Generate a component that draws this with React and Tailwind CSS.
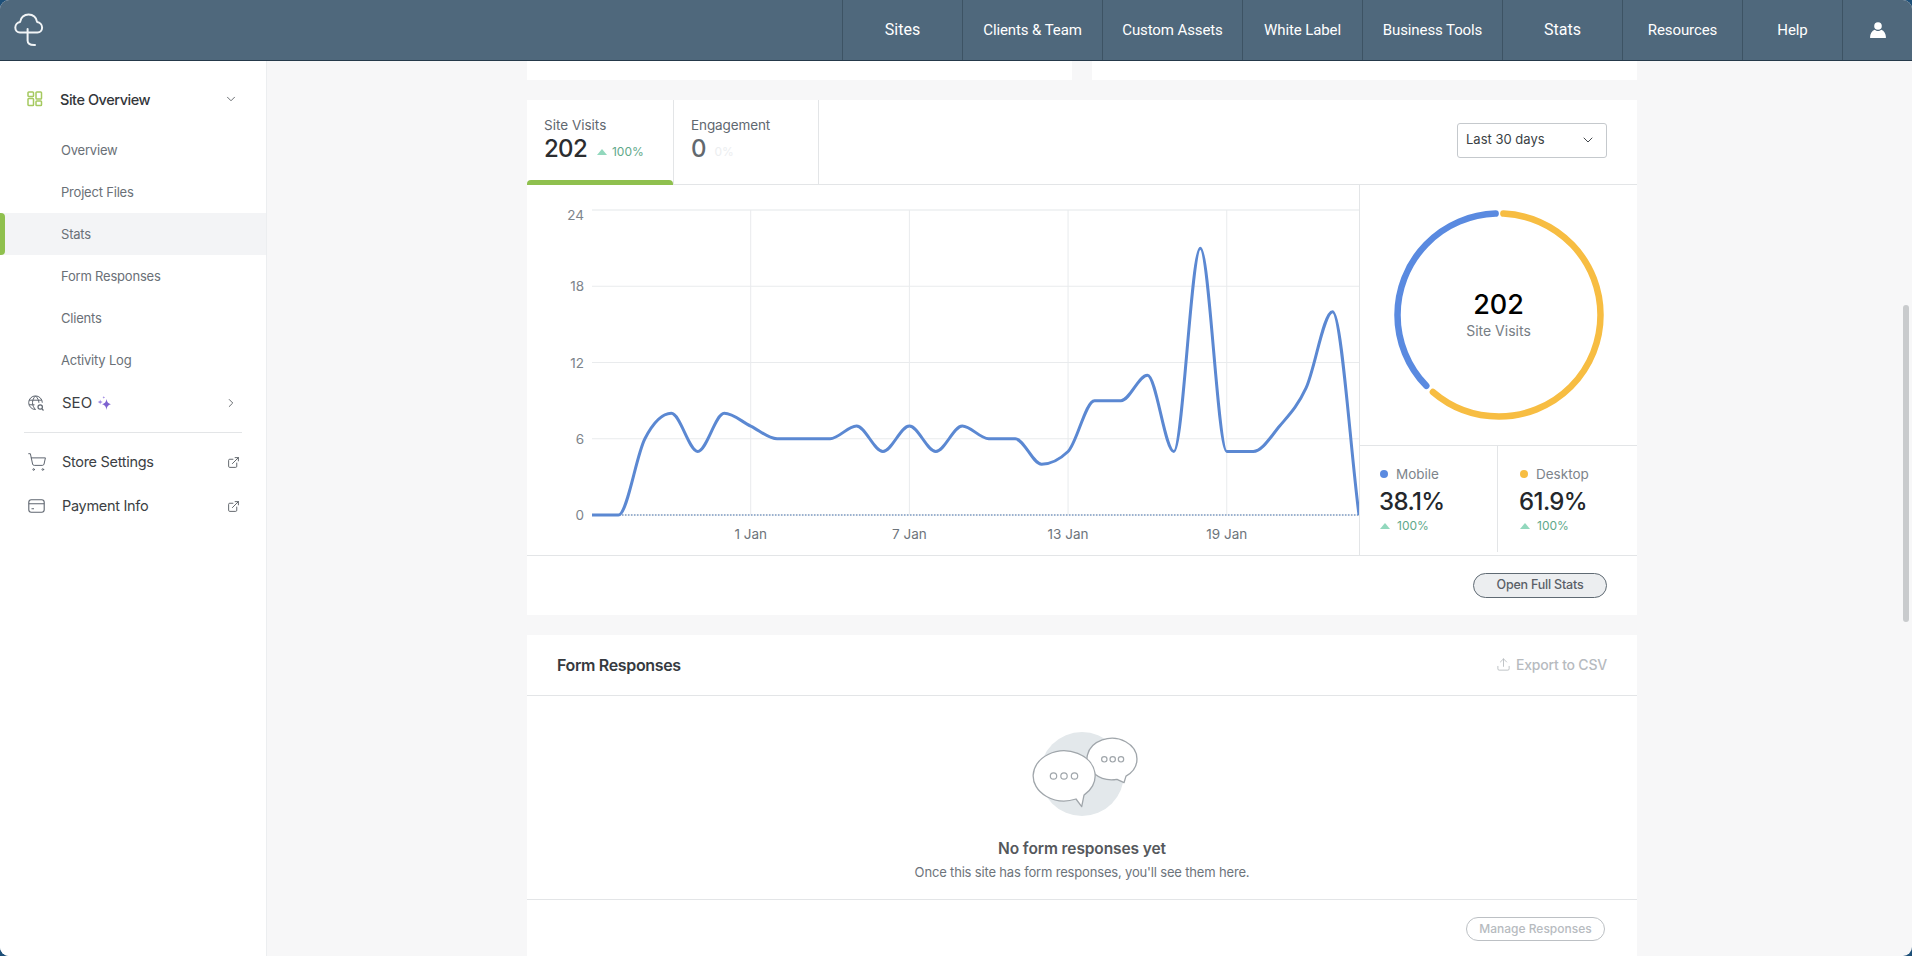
import { ChevronDown, ChevronRight, ExternalLink, ShoppingCart, Upload } from "lucide-react"

const navItems = [
  { label: "Sites", width: "w-[120px]", big: true },
  { label: "Clients & Team", width: "w-[140px]" },
  { label: "Custom Assets", width: "w-[140px]" },
  { label: "White Label", width: "w-[120px]" },
  { label: "Business Tools", width: "w-[140px]" },
  { label: "Stats", width: "w-[120px]", big: true },
  { label: "Resources", width: "w-[120px]" },
  { label: "Help", width: "w-[100px]" },
]

const subItems = ["Overview", "Project Files", "Stats", "Form Responses", "Clients", "Activity Log"]

// visits per day, 26 Dec to 24 Jan
const visits = [0, 0, 6, 8, 5, 8, 7, 6, 6, 6, 7, 5, 7, 5, 7, 6, 6, 4, 5, 9, 9, 11, 5, 21, 5, 5, 7, 10, 16, 0]

const chartLeft = 65
const chartBottom = 330
const dayWidth = 767 / 29
const unit = 305 / 24

function monotonePath(values) {
  const pts = values.map((v, i) => [chartLeft + i * dayWidth, chartBottom - v * unit])
  const n = pts.length
  const slopes = []
  for (let i = 0; i < n - 1; i++) slopes.push((pts[i + 1][1] - pts[i][1]) / dayWidth)
  const tangents = [slopes[0]]
  for (let i = 1; i < n - 1; i++) {
    const a = slopes[i - 1]
    const b = slopes[i]
    tangents.push(a * b <= 0 ? 0 : (Math.sign(a) + Math.sign(b)) * Math.min(Math.abs(a), Math.abs(b), 0.25 * Math.abs(a + b)))
  }
  tangents.push(slopes[n - 2])
  let d = `M${pts[0][0]} ${pts[0][1]}`
  for (let i = 0; i < n - 1; i++) {
    const h = dayWidth / 3
    d += ` C${pts[i][0] + h} ${pts[i][1] + tangents[i] * h} ${pts[i + 1][0] - h} ${pts[i + 1][1] - tangents[i + 1] * h} ${pts[i + 1][0]} ${pts[i + 1][1]}`
  }
  return d
}

function Logo() {
  return (
    <svg width="58" height="60" viewBox="0 0 58 60" fill="none" stroke="#f1f4f6" strokeWidth="2" strokeLinecap="round" strokeLinejoin="round">
      <path d="M19.900 32.500c-2.600 0-4.600-2.200-4.600-4.900 0-2.900 2.100-5.200 4.800-5.600.5-4.400 4.100-7.500 8.500-7.500s8 3.100 8.500 7.500c2.800.4 5 2.700 5 5.600 0 2.700-2 4.900-4.600 4.900z" />
      <path d="M27.600 29v11.500c0 3 1.800 4.700 7.400 4.500" />
    </svg>
  )
}

function UserIcon() {
  return (
    <svg width="16" height="16" viewBox="0 0 16 16" fill="#fff">
      <circle cx="8" cy="4" r="3.800" />
      <path d="M4.700 7.700C2 8.800.2 11.300 0 15.500c0 .3.200.5.500.5h15c.3 0 .5-.2.500-.5-.2-4.200-2-6.700-4.700-7.800-1 .9-2.300 1.300-3.300 1.300s-2.300-.4-3.300-1.300z" />
    </svg>
  )
}

function OverviewIcon() {
  return (
    <svg width="16" height="16" viewBox="0 0 16 16" fill="none" stroke="#a5c95f" strokeWidth="1.500">
      <rect x="1" y="1" width="5.500" height="4.500" rx="0.800" />
      <rect x="1" y="7.500" width="5.500" height="7" rx="0.800" />
      <rect x="9" y="1" width="5.500" height="7" rx="0.800" />
      <rect x="9" y="10" width="5.500" height="4.500" rx="0.800" />
    </svg>
  )
}

function SeoIcon() {
  return (
    <svg width="17" height="17" viewBox="0 0 17 17" fill="none" stroke="#5f6670" strokeWidth="1">
      <path d="M7.500 14.500a6.800 6.800 0 1 1 6.800-6.800" />
      <path d="M7.500 1c-4 3.800-4 9.500 0 13.500M7.500 1c2.400 2.200 3.300 4.500 3.400 6.800M1 5.200h12.800M1 9.800h5.500" />
      <circle cx="12.200" cy="12" r="2.200" strokeWidth="1.200" />
      <path d="M13.800 13.700l1.700 1.800" strokeWidth="1.200" />
    </svg>
  )
}

function Sparkles() {
  return (
    <svg width="15" height="15" viewBox="0 0 15 15" fill="#7d62d0">
      <path d="M9.500 3c.5 3 1.500 4.300 4.500 5.200-3 .9-4 2.200-4.500 5.800C9 10.400 8 9.100 5 8.200 8 7.300 9 6 9.500 3z" />
      <path d="M3.200 3.500c.3 1.500.8 2 2.500 2.500-1.700.5-2.200 1-2.500 2.500C2.900 7 2.400 6.500.7 6c1.700-.5 2.200-1 2.500-2.500z" fill="#a08ae2" />
      <path d="M6.800 0c.2.900.4 1.100 1.300 1.400-.9.300-1.100.5-1.300 1.400-.2-.9-.4-1.100-1.300-1.400.9-.3 1.100-.5 1.300-1.400z" fill="#a08ae2" />
    </svg>
  )
}

function CardIcon() {
  return (
    <svg width="17" height="14" viewBox="0 0 17 14" fill="none" stroke="#5f6670" strokeWidth="1.100">
      <rect x="0.800" y="0.800" width="15.400" height="12.400" rx="2.500" />
      <path d="M.8 4.700h15.400M3.500 9.700h2.500" />
    </svg>
  )
}

function Trend({ className }) {
  return (
    <span className={`flex items-center text-[12px] leading-none text-[#5fa88a] ${className}`}>
      <span className="w-0 h-0 border-x-[5px] border-x-transparent border-b-[6px] border-b-[#92d8bd]"></span>
      100%
    </span>
  )
}

function VisitsChart() {
  const yLabels = [24, 18, 12, 6, 0]
  const xLabels = [["1 Jan", 6], ["7 Jan", 12], ["13 Jan", 18], ["19 Jan", 24]]
  return (
    <svg width="832" height="370" viewBox="0 0 832 370" className="block shrink-0" fontFamily="Inter, sans-serif" fontSize="13.500">
      {yLabels.map(v => (
        <line key={v} x1={chartLeft} x2="832" y1={chartBottom - v * unit} y2={chartBottom - v * unit} stroke={v === 24 ? "#f1f3f4" : "#e9ebed"} strokeWidth={v === 24 ? 2 : 1} />
      ))}
      {xLabels.map(([label, day]) => (
        <line key={label} x1={chartLeft + day * dayWidth} x2={chartLeft + day * dayWidth} y1="25" y2={chartBottom} stroke="#e9ebed" />
      ))}
      <line x1={chartLeft} x2="832" y1={chartBottom} y2={chartBottom} stroke="#7f9cc4" strokeWidth="1.500" strokeDasharray="1.500 1.500" />
      <path d={monotonePath(visits)} fill="none" stroke="#5b88d2" strokeWidth="3" strokeLinejoin="round" />
      {yLabels.map(v => (
        <text key={v} x="57" y={v === 24 ? 35 : chartBottom - v * unit + 5} textAnchor="end" fill="#7d848b">{v}</text>
      ))}
      {xLabels.map(([label, day]) => (
        <text key={label} x={chartLeft + day * dayWidth} y="354" textAnchor="middle" fill="#6d747b">{label}</text>
      ))}
    </svg>
  )
}

function Donut() {
  const r = 101.500
  const c = 2 * Math.PI * r
  const mobile = 0.381
  const gap = 9
  return (
    <div className="relative w-[216px] h-[216px]">
      <svg width="216" height="216" viewBox="0 0 216 216" fill="none" strokeWidth="6.500" strokeLinecap="round" className="-rotate-90">
        <circle cx="108" cy="108" r={r} stroke="#f7bd42" strokeDasharray={`${c * (1 - mobile) - gap} ${c}`} strokeDashoffset={-gap / 2} />
        <circle cx="108" cy="108" r={r} stroke="#5a8ae0" strokeDasharray={`${c * mobile - gap} ${c}`} strokeDashoffset={-(c * (1 - mobile) + gap / 2)} />
      </svg>
      <div className="absolute inset-0 flex flex-col items-center justify-center">
        <span className="text-[27px] leading-[32px] font-medium text-black">202</span>
        <span className="text-[14px] leading-[20px] text-[#767d84]">Site Visits</span>
      </div>
    </div>
  )
}

function DeviceStat({ label, value, dot, className }) {
  return (
    <div className={`h-[106px] flex flex-col pt-[19px] ${className}`}>
      <div className="flex items-center gap-[8px] text-[13.500px] leading-[18px] text-[#7d848b]">
        <span className={`w-[8px] h-[8px] rounded-full ${dot}`}></span>
        {label}
      </div>
      <span className="-ml-[1px] mt-[4px] text-[24px] leading-[30px] font-medium tracking-[-0.6px] text-[#24272b]">{value}</span>
      <Trend className="mt-[3px] gap-[7px]" />
    </div>
  )
}

function ChatIllustration() {
  return (
    <svg width="112" height="86" viewBox="0 0 112 86" className="block">
      <circle cx="56" cy="42" r="42" fill="#e3e8eb" />
      <g fill="#fff" stroke="#a0a6ab" strokeWidth="1.300" strokeLinejoin="round">
        <path d="M91 47.300A25 20.700 0 1 1 100 44.150L98 50.700Z" />
        <path d="M50 67A31 25 0 1 1 58 63.100L55.700 74.700Z" />
      </g>
      <g fill="none" stroke="#a0a6ab" strokeWidth="1.200">
        <circle cx="27.500" cy="44" r="3.200" />
        <circle cx="38" cy="44" r="3.200" />
        <circle cx="48.500" cy="44" r="3.200" />
        <circle cx="78.300" cy="27.300" r="2.700" />
        <circle cx="86.700" cy="27.300" r="2.700" />
        <circle cx="95" cy="27.300" r="2.700" />
      </g>
    </svg>
  )
}

function Sidebar() {
  return (
    <aside className="w-[267px] shrink-0 h-full bg-white border-r border-[#eceef0] pt-[16px]">
      <div className="h-[44px] flex items-center pl-[27px] pr-[28px] text-[#33363a]">
        <OverviewIcon />
        <span className="ml-[17px] pt-[1px] text-[14.500px] font-medium tracking-[-0.45px] flex-1">Site Overview</span>
        <ChevronDown size={14} strokeWidth={1.500} className="text-[#55595e]" />
      </div>
      <div className="mt-[8px]">
        {subItems.map(item => (
          <div key={item} className={`relative h-[42px] flex items-center pl-[61px] pt-[1px] text-[13px] tracking-[-0.2px] text-[#6a7077] ${item === "Stats" ? "bg-[#f3f4f6]" : ""}`}>
            {item === "Stats" && <span className="absolute left-0 top-0 bottom-0 w-[5px] bg-[#8fc04e] rounded-r-[4px]"></span>}
            {item}
          </div>
        ))}
      </div>
      <div className="mt-[1px] h-[42px] flex items-center pl-[28px] pr-[28px] text-[#3c3f44]">
        <SeoIcon />
        <span className="ml-[17px] text-[15px]">SEO</span>
        <span className="ml-[5px] flex-1"><Sparkles /></span>
        <ChevronRight size={14} strokeWidth={1.500} className="text-[#55595e]" />
      </div>
      <div className="mt-[8px] mx-[24px] border-t border-[#e3e5e7]"></div>
      <div className="mt-[8px] h-[42px] flex items-center pl-[27px] pr-[26px] text-[#3c3f44]">
        <ShoppingCart size={20} strokeWidth={1.200} className="text-[#5f6670]" />
        <span className="ml-[15px] text-[14.500px] tracking-[-0.3px] flex-1">Store Settings</span>
        <ExternalLink size={13} strokeWidth={1.600} className="text-[#4b5158]" />
      </div>
      <div className="mt-[2px] h-[42px] flex items-center pl-[28px] pr-[26px] text-[#3c3f44]">
        <CardIcon />
        <span className="ml-[17px] text-[14.500px] tracking-[-0.3px] flex-1">Payment Info</span>
        <ExternalLink size={13} strokeWidth={1.600} className="text-[#4b5158]" />
      </div>
    </aside>
  )
}

function StatsCard() {
  return (
    <section className="mt-[20px] bg-white">
      <div className="h-[85px] flex border-b border-[#e3e5e7]">
        <div className="relative w-[147px] border-r border-[#e3e5e7] pl-[17px] pt-[15px]">
          <div className="text-[13.500px] leading-[20px] text-[#5f6870]">Site Visits</div>
          <div className="flex items-center pt-[1px]">
            <span className="text-[24px] leading-[26px] font-medium tracking-[-0.7px] text-[#2b2d30]">202</span>
            <Trend className="ml-[10px] mt-[5px] gap-[5px]" />
          </div>
          <span className="absolute left-0 right-0 bottom-[-1px] h-[5px] bg-[#8fc04e] rounded-t-[4px]"></span>
        </div>
        <div className="w-[145px] border-r border-[#e3e5e7] pl-[17px] pt-[15px]">
          <div className="text-[13.500px] leading-[20px] tracking-[-0.1px] text-[#5f6870]">Engagement</div>
          <div className="flex items-center pt-[1px]">
            <span className="text-[24px] leading-[26px] font-medium text-[#62686e]">0</span>
            <span className="ml-[8px] mt-[5px] text-[12px] leading-none text-[#eceef0]">0%</span>
          </div>
        </div>
        <div className="flex-1 flex justify-end pt-[23px] pr-[30px]">
          <div className="w-[150px] h-[35px] flex items-center justify-between pl-[8px] pr-[10px] pb-[1px] border border-[#c5c9cd] rounded-[3px] text-[13px] text-[#3a3f45]">
            Last 30 days
            <ChevronDown size={16} strokeWidth={1.500} className="text-[#45494e]" />
          </div>
        </div>
      </div>
      <div className="h-[371px] flex border-b border-[#e3e5e7]">
        <VisitsChart />
        <div className="flex-1 border-l border-[#e3e5e7] flex flex-col">
          <div className="h-[261px] shrink-0 flex items-center justify-center border-b border-[#e3e5e7]">
            <Donut />
          </div>
          <div className="flex">
            <DeviceStat label="Mobile" value="38.1%" dot="bg-[#5a8ae0]" className="w-[138px] pl-[20px] border-r border-[#e3e5e7]" />
            <DeviceStat label="Desktop" value="61.9%" dot="bg-[#f7bd42]" className="flex-1 pl-[22px]" />
          </div>
        </div>
      </div>
      <div className="h-[59px] flex justify-end pt-[17px] pr-[30px]">
        <button className="w-[134px] h-[25px] rounded-full bg-[#eceef0] border border-[#5f6a73] text-[12.500px] font-medium tracking-[-0.2px] text-[#5a6067]">Open Full Stats</button>
      </div>
    </section>
  )
}

function FormResponses() {
  return (
    <section className="mt-[20px] bg-white">
      <div className="h-[61px] flex items-center justify-between pl-[30px] pr-[30px] pb-[1px] border-b border-[#e3e5e7]">
        <span className="text-[16px] font-semibold tracking-[-0.35px] text-[#363a3f]">Form Responses</span>
        <span className="flex items-center gap-[5px] text-[14px] tracking-[-0.2px] font-medium text-[#b7bbbf]">
          <Upload size={15} strokeWidth={1.400} />
          Export to CSV
        </span>
      </div>
      <div className="h-[204px] flex flex-col items-center pt-[36px] border-b border-[#e3e5e7]">
        <ChatIllustration />
        <span className="mt-[19px] text-[15.500px] leading-[24px] font-semibold tracking-[-0.1px] text-[#55585c]">No form responses yet</span>
        <span className="mt-[1px] text-[13px] leading-[20px] tracking-[-0.17px] text-[#6d747b]">Once this site has form responses, you'll see them here.</span>
      </div>
      <div className="h-[100px] flex justify-end pt-[17px] pr-[32px]">
        <button className="w-[139px] h-[24px] rounded-full border border-[#bcc0c4] text-[12px] font-medium text-[#b7bbbf]">Manage Responses</button>
      </div>
    </section>
  )
}

function App() {
  return (
    <div className="w-full h-[100vh] bg-[#1d4f78] overflow-hidden font-['Inter',sans-serif]">
      <div className="w-full h-full rounded-[9px] overflow-hidden flex flex-col bg-[#f7f7f8]">
        <header className="h-[61px] shrink-0 flex justify-between bg-[#4f687c] border-b border-[#25394a]">
          <Logo />
          <nav className="flex">
            {navItems.map(item => (
              <div key={item.label} className={`${item.width} flex items-center justify-center border-l border-[#3d5364] text-white font-['Roboto',sans-serif] ${item.big ? "text-[16px]" : "text-[15px] tracking-[-0.1px]"}`}>
                {item.label}
              </div>
            ))}
            <div className="w-[70px] flex items-center justify-center border-l border-[#3d5364]">
              <UserIcon />
            </div>
          </nav>
        </header>

        <div className="flex-1 flex min-h-0">
          <Sidebar />
          <main className="flex-1 min-w-0 overflow-hidden">
            <div className="w-[1110px] mx-auto">
              <div className="flex gap-[20px] h-[19px]">
                <div className="flex-1 bg-white"></div>
                <div className="flex-1 bg-white"></div>
              </div>
              <StatsCard />
              <FormResponses />
            </div>
          </main>
          {/* scrollbar */}
          <div className="w-[15px] shrink-0 pt-[244px] pl-[6px]">
            <div className="w-[6px] h-[317px] rounded-full bg-[#c9cbcd]"></div>
          </div>
        </div>
      </div>
    </div>
  )
}

export default App
